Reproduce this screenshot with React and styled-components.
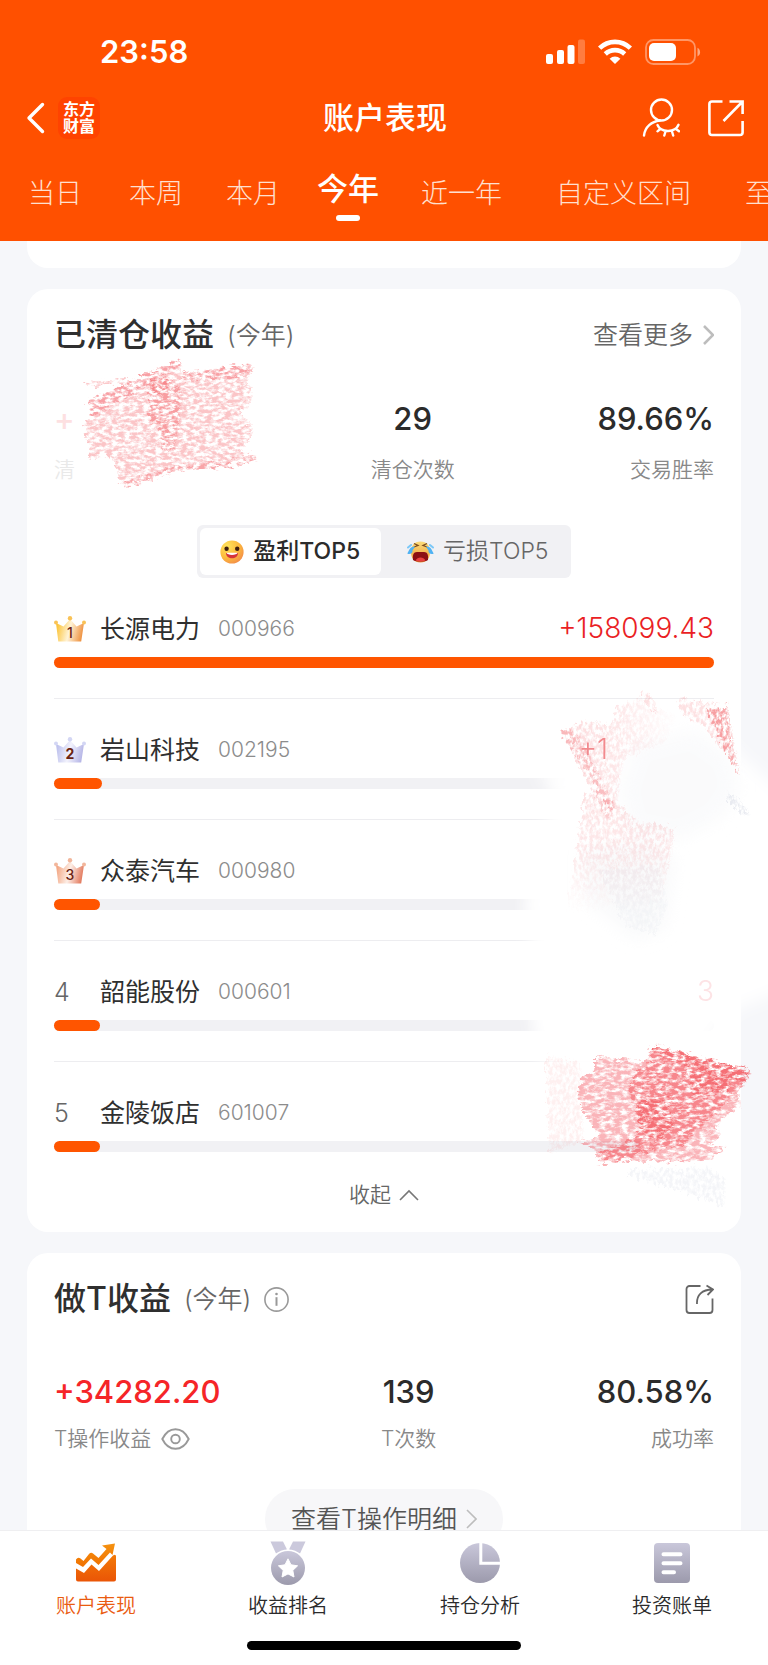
import React, { useState } from 'react'
import styled, { createGlobalStyle } from 'styled-components'

const Global = createGlobalStyle`
    * {
        box-sizing: border-box;
    }

    body {
        margin: 0;
        background: #f6f7fa;
        color: #2f2f2f;
        font-family: Inter, "Noto Sans CJK SC", sans-serif;
        line-height: 1.2;
    }

    h1, h2, p, ol {
        margin: 0;
        padding: 0;
    }

    button {
        margin: 0;
        padding: 0;
        border: 0;
        background: none;
        color: inherit;
        font: inherit;
        cursor: pointer;
    }

    a {
        color: inherit;
        text-decoration: none;
    }

    svg {
        display: block;
        flex: none;
    }
`

const Page = styled.div`
    display: flex;
    flex-direction: column;
    height: 100vh;
    overflow: hidden;
`

// ---------- header ----------

const Header = styled.header`
    flex: none;
    padding-top: 32px;
    background: #ff5000;
    color: #fff;
`

const StatusBar = styled.div`
    display: flex;
    align-items: center;
    justify-content: space-between;
    height: 40px;
    padding: 0 67px 0 100px;
    font-size: 31px;
    font-weight: 600;
`

const StatusIcons = styled.div`
    display: flex;
    align-items: center;
    gap: 13px;
`

const NavBar = styled.div`
    display: grid;
    grid-template-columns: 1fr auto 1fr;
    align-items: center;
    height: 48px;
    margin-top: 22px;
    padding: 0 24px 0 26px;

    & h1 {
        font-size: 31px;
        font-weight: 500;
        line-height: 48px;
    }
`

const NavSide = styled.div`
    display: flex;
    align-items: center;
    justify-content: ${({ $end }) => ($end ? 'flex-end' : 'flex-start')};
    gap: ${({ $end }) => ($end ? 28 : 13)}px;
`

const Logo = styled.span`
    display: block;
    width: 42px;
    height: 42px;
    padding-top: 4px;
    border-radius: 9px;
    background: #ff4300;
    font-size: 16px;
    font-weight: 700;
    line-height: 17px;
    text-align: center;
`

const PeriodTabs = styled.nav`
    display: flex;
    align-items: flex-start;
    height: 72px;
    margin-top: 27px;
    padding-left: 28px;
    overflow: hidden;
`

const PeriodTab = styled.button`
    flex: none;
    margin-right: ${({ $gap }) => $gap}px;
    font-size: ${({ $active }) => ($active ? 31 : 27)}px;
    font-weight: ${({ $active }) => ($active ? 500 : 300)};
    line-height: ${({ $active }) => ($active ? 40 : 50)}px;
    color: ${({ $active }) => ($active ? '#fff' : '#ffe0d1')};

    &::after {
        content: '';
        display: ${({ $active }) => ($active ? 'block' : 'none')};
        width: 24px;
        height: 6px;
        margin: 6px auto 0;
        border-radius: 3px;
        background: #fff;
    }
`

// ---------- cards ----------

const Content = styled.main`
    flex: 1;
    min-height: 0;
    padding: 0 27px;
    overflow: hidden;
`

const Card = styled.section`
    position: relative;
    margin-bottom: 21px;
    padding: 24px 27px 22px;
    border-radius: 21px;
    background: #fff;
`

const CardTail = styled.div`
    height: 27px;
    margin-bottom: 21px;
    border-radius: 0 0 21px 21px;
    background: #fff;
`

const CardHead = styled.div`
    display: flex;
    align-items: center;
    justify-content: space-between;
    height: 44px;
`

const CardTitle = styled.div`
    display: flex;
    align-items: center;
    gap: 13px;

    & h2 {
        font-size: 32px;
        font-weight: 500;
        line-height: 44px;
    }

    & span {
        font-size: 25px;
        font-weight: 350;
        color: #666;
    }
`

const MoreLink = styled.a`
    display: flex;
    align-items: center;
    gap: 10px;
    font-size: 25px;
    font-weight: 350;
    color: #666;
`

const Stats = styled.div`
    display: flex;
    justify-content: space-between;
    margin-top: ${({ $top }) => $top}px;
`

const Stat = styled.div`
    display: flex;
    flex-direction: column;
    align-items: ${({ $align }) => $align || 'center'};
    gap: ${({ $gap }) => $gap}px;
    min-width: ${({ $min }) => $min || 0}px;
`

const StatValue = styled.strong`
    font-size: 31px;
    font-weight: 500;
    line-height: 40px;
    color: ${({ $color }) => $color || '#2b2b2b'};
`

const StatLabel = styled.span`
    display: flex;
    align-items: center;
    gap: 10px;
    font-size: 21px;
    font-weight: 350;
    line-height: 30px;
    color: ${({ $color }) => $color || '#888'};
`

const Segmented = styled.div`
    display: flex;
    gap: 7px;
    width: 374px;
    height: 53px;
    margin: 40px auto 0;
    padding: 3px;
    border-radius: 6px;
    background: #f1f1f4;
`

const Segment = styled.button`
    display: flex;
    flex: 1;
    align-items: center;
    justify-content: center;
    gap: 9px;
    border-radius: 6px;
    background: ${({ $active }) => ($active ? '#fff' : 'transparent')};
    font-size: 23px;
    font-weight: ${({ $active }) => ($active ? 500 : 350)};
    color: ${({ $active }) => ($active ? '#2b2b2b' : '#666')};
`

const StockList = styled.ol`
    list-style: none;
`

const StockRow = styled.li`
    padding: 33px 0 30px;
    border-bottom: 1px solid #ededf0;

    &:last-child {
        padding-bottom: 0;
        border-bottom: 0;
    }
`

const StockLine = styled.div`
    display: flex;
    align-items: center;
    height: 36px;
`

const Rank = styled.span`
    width: 46px;
    font-size: 25px;
    font-weight: 350;
    color: #666;
`

const StockName = styled.span`
    width: 118px;
    font-size: 25px;
    font-weight: 400;
`

const StockCode = styled.span`
    flex: 1;
    font-size: 21px;
    font-weight: 300;
    color: #8c8c8c;
`

const Amount = styled.span`
    position: relative;
    z-index: 1;
    padding-right: ${({ $pad }) => $pad || 0}px;
    font-size: 28px;
    font-weight: 350;
    color: ${({ $color }) => $color || '#ea1f25'};
`

const Track = styled.div`
    height: 11px;
    margin-top: 10px;
    border-radius: 6px;
    background: #f1f1f4;
`

const Fill = styled.div`
    height: 11px;
    border-radius: 6px;
    background: #ff5500;
`

const FoldButton = styled.button`
    display: flex;
    align-items: center;
    gap: 8px;
    margin: 28px auto 0;
    font-size: 21px;
    font-weight: 350;
    line-height: 30px;
    color: #666;
`

const DetailButton = styled.button`
    display: flex;
    align-items: center;
    gap: 9px;
    height: 60px;
    margin: 35px auto 0;
    padding: 0 26px;
    border-radius: 30px;
    background: #f7f7f9;
    font-size: 25px;
    font-weight: 350;
    color: #555;
`

// crayon strokes lie over the card and take no clicks
const Scribble = styled.svg`
    position: absolute;
    top: 0;
    ${({ $side }) => $side}: ${({ $side }) => ($side === 'right' ? -27 : 0)}px;
    overflow: visible;
    pointer-events: none;
`

// ---------- bottom bar ----------

const TabBar = styled.footer`
    flex: none;
    padding: 10px 0 15px;
    border-top: 1px solid #efeff1;
    background: #fff;
`

const TabRow = styled.nav`
    display: grid;
    grid-template-columns: repeat(4, 1fr);
`

const TabItem = styled.a`
    display: flex;
    flex-direction: column;
    align-items: center;
    gap: 8px;
    font-size: 20px;
    font-weight: 350;
    line-height: 26px;
    color: ${({ $active }) => ($active ? '#ea5b10' : '#2b2b2b')};
`

const HomeIndicator = styled.div`
    width: 274px;
    height: 9px;
    margin: 22px auto 0;
    border-radius: 5px;
    background: #000;
`

// ---------- icons ----------

const Signal = () => (
    <svg width="39" height="26" viewBox="0 0 39 26" fill="#fff">
        <rect x="0" y="15" width="7" height="10" rx="2" />
        <rect x="11" y="11" width="7" height="14" rx="2" />
        <rect x="21.500" y="6" width="7" height="19" rx="2" />
        <rect x="32" y="0.500" width="7" height="24.500" rx="2" opacity="0.25" />
    </svg>
)

const Wifi = () => (
    <svg width="34" height="26" viewBox="0 0 34 26" fill="none" stroke="#fff" strokeWidth="4.600">
        <path d="M1.600 9.200a22 22 0 0 1 30.800 0" />
        <path d="M7.300 15a14 14 0 0 1 19.400 0" />
        <path d="M17 25l-5.400-5.300a8 8 0 0 1 10.800 0z" fill="#fff" stroke="none" />
    </svg>
)

const Battery = () => (
    <svg width="56" height="26" viewBox="0 0 56 26">
        <rect x="1" y="1" width="49" height="24" rx="7.500" fill="none" stroke="#fff" strokeWidth="1.800" opacity="0.4" />
        <rect x="4" y="4" width="27" height="18" rx="5" fill="#fff" />
        <path d="M52.500 8.800c2.800 1 4 6.800 0 8.600z" fill="#fff" opacity="0.5" />
    </svg>
)

const BackIcon = () => (
    <svg width="19" height="34" viewBox="0 0 19 34" fill="none" stroke="#fff" strokeWidth="3.400" strokeLinecap="round" strokeLinejoin="round">
        <path d="M16.500 3.500L3 17l13.500 13.500" />
    </svg>
)

const HiddenUserIcon = () => (
    <svg width="38" height="40" viewBox="0 0 38 40" fill="none" stroke="#fff" strokeWidth="2.400" strokeLinecap="round">
        <circle cx="19.500" cy="12" r="10.500" />
        <path d="M18 22.500C9.500 23.500 3 29 2 37.500" />
        <path d="M15.500 27c3 7.500 17.500 8.500 21-.2M18.200 31l-2.700 2.300M23.500 33.500l-1.200 4M30 33.500l1.200 4M34 31l3 2.300" />
    </svg>
)

const ExportIcon = () => (
    <svg width="36" height="38" viewBox="0 0 36 38" fill="none" stroke="#fff" strokeWidth="2.600">
        <path d="M14.500 2.500H4A2.600 2.600 0 0 0 1.400 5v28.500A2.600 2.600 0 0 0 4 36h28a2.600 2.600 0 0 0 2.600-2.500V22" />
        <path d="M21.500 2.500h13.100V15M34.600 2.500L15.500 22" />
    </svg>
)

const Chevron = ({ width = 11, height = 20, stroke = '#bdbdbd', strokeWidth = 2.6 }) => (
    <svg width={width} height={height} viewBox="0 0 11 20" fill="none" stroke={stroke} strokeWidth={strokeWidth}>
        <path d="M1 1l9 9-9 9" />
    </svg>
)

const ChevronUp = () => (
    <svg width="20" height="12" viewBox="0 0 20 12" fill="none" stroke="#777" strokeWidth="1.600">
        <path d="M1 11l9-9 9 9" />
    </svg>
)

const InfoIcon = () => (
    <svg width="25" height="25" viewBox="0 0 25 25" fill="none" stroke="#999" strokeWidth="1.600">
        <circle cx="12.500" cy="12.500" r="11.600" />
        <path d="M12.500 10.200v8.600" strokeWidth="2" />
        <circle cx="12.500" cy="7" r="1.300" fill="#999" stroke="none" />
    </svg>
)

const ShareIcon = () => (
    <svg width="29" height="30" viewBox="0 0 29 30" fill="none" stroke="#666" strokeWidth="1.800">
        <path d="M15.500 2H4.500A3 3 0 0 0 1.500 5v21a3 3 0 0 0 3 3h20a3 3 0 0 0 3-3V14.500" />
        <path d="M12 20C11.500 11 17 5.500 27.500 5.500M21.500 1.500l6.500 4-5.500 5.500" />
    </svg>
)

const EyeIcon = () => (
    <svg width="29" height="22" viewBox="0 0 29 22" fill="none" stroke="#999" strokeWidth="1.900">
        <path d="M1.300 11C4.500 4.500 9 1.200 14.500 1.200S24.500 4.500 27.700 11c-3.200 6.500-7.700 9.800-13.200 9.800S4.500 17.500 1.300 11z" />
        <circle cx="14.500" cy="11" r="4.300" />
    </svg>
)

const SmileIcon = () => (
    <svg width="24" height="24" viewBox="0 0 24 24">
        <defs>
            <radialGradient id="smile" cx="0.3" cy="0.25" r="0.85">
                <stop offset="0" stopColor="#ffe45c" />
                <stop offset="0.600" stopColor="#fcb83c" />
                <stop offset="1" stopColor="#f28a4a" />
            </radialGradient>
        </defs>
        <circle cx="12" cy="12" r="11.600" fill="url(#smile)" />
        <circle cx="6.600" cy="8.800" r="2.200" fill="#40200f" />
        <circle cx="17.200" cy="8.800" r="2.200" fill="#40200f" />
        <path d="M6 13h12c0 7-12 7-12 0z" fill="#d5343a" />
        <path d="M6.500 12.800h11c-.5 2.800-10.500 2.800-11 0z" fill="#fff" />
    </svg>
)

const CryIcon = () => (
    <svg width="27" height="22" viewBox="0 0 27 22">
        <defs>
            <linearGradient id="cry" x1="0" y1="0" x2="0" y2="1">
                <stop offset="0" stopColor="#fbdc7a" />
                <stop offset="1" stopColor="#ef9a36" />
            </linearGradient>
        </defs>
        <path d="M13.500.5C20 .5 23 5 23 11s-3 10.500-9.500 10.500S4 17 4 11 7 .5 13.500.5z" fill="url(#cry)" />
        <path d="M7 2.500l4 2-4 1.500M20 2.500l-4 2 4 1.500" fill="none" stroke="#7a4a1e" strokeWidth="1.300" />
        <path d="M6 19c-1-9 3-8 7.500-8s8.500-1 7.500 8c-3 2-12 2-15 0z" fill="#8b0f14" />
        <path d="M8.500 19.500c2-4 8-4 10 0-3 1.300-7 1.300-10 0z" fill="#e8413f" />
        <path d="M8 5.500C3 5 2.500 9 .3 12.500 3 14 6 12 5.500 9.500zM19 5.500c5-.5 5.500 3.500 7.700 7-2.700 1.500-5.700-.5-5.200-3z" fill="#4fb2f3" />
        <path d="M4 4L1 6.500M23 4l3 2.500" stroke="#7cc8f7" strokeWidth="2" strokeLinecap="round" />
    </svg>
)

const crownColors = {
    1: ['#fbc02d', '#fff3d6', '#ee8f3c', '#f9c256'],
    2: ['#b9bdec', '#f2f2fc', '#b4b4e6', '#d3d6f4'],
    3: ['#f2a17c', '#fdeee6', '#e2775a', '#f2b69b'],
}

const Crown = ({ rank }) => {
    const [from, mid, to, dot] = crownColors[rank]
    return (
        <svg width="32" height="26" viewBox="0 0 32 26">
            <defs>
                <linearGradient id={`crown${rank}`} x1="0" y1="0.300" x2="1" y2="0.500">
                    <stop offset="0" stopColor={from} />
                    <stop offset="0.500" stopColor={mid} />
                    <stop offset="1" stopColor={to} />
                </linearGradient>
            </defs>
            <path d="M2 7l7.500 3.500L16 3l6.500 7.500L30 7l-2.800 18.500H4.300z" fill={`url(#crown${rank})`} />
            <circle cx="2" cy="6.500" r="2" fill={dot} />
            <circle cx="16" cy="2.300" r="2.200" fill={dot} />
            <circle cx="30" cy="6.500" r="2" fill={dot} />
            <text x="16" y="21.500" textAnchor="middle" fontFamily="Inter, sans-serif" fontSize="14" fontWeight={rank === 2 ? 700 : 500} fill="#6b2413">
                {rank}
            </text>
        </svg>
    )
}

const Shade = () => (
    <defs>
        <linearGradient id="shade" x1="0" y1="0" x2="0" y2="1">
            <stop offset="0" stopColor="#c9c7da" />
            <stop offset="1" stopColor="#9c9aac" />
        </linearGradient>
    </defs>
)

const TrendIcon = () => (
    <svg width="40" height="44" viewBox="0 0 40 44">
        <defs>
            <linearGradient id="trend" x1="0" y1="0" x2="0" y2="1">
                <stop offset="0" stopColor="#f59210" />
                <stop offset="1" stopColor="#f07000" />
            </linearGradient>
            <linearGradient id="trendBase" x1="0" y1="0" x2="0" y2="1">
                <stop offset="0" stopColor="#f37a08" />
                <stop offset="1" stopColor="#ea5506" />
            </linearGradient>
        </defs>
        <path d="M0 18.500q2-3 4.500-1l3 2.500 5.500-7q2-2 4-.5l5.500 4.500L30.500 8 26 4.500 39 2.500 36.500 14l-2.500-2.500L22.500 24l-7.500-6.500-8 8.500L0 22z" fill="url(#trend)" />
        <path d="M0 27.500l8 4.500 7.500-8.500 7.500 6.500 14-15.500q3-2 3 1V38.500a2 2 0 0 1-2 2H2a2 2 0 0 1-2-2z" fill="url(#trendBase)" />
    </svg>
)

const MedalIcon = () => (
    <svg width="36" height="44" viewBox="0 0 36 44">
        <Shade />
        <path d="M.5.500H13l4 8-11 4zM23 .5h12.500l-5.500 12-11-4z" fill="#cbc9dc" />
        <circle cx="18" cy="27" r="18.600" fill="#fff" />
        <circle cx="18" cy="27" r="17" fill="url(#shade)" />
        <path d="M18 17.800l3 6 6.600 1-4.800 4.600 1.200 6.600-6-3.100-6 3.100 1.200-6.600-4.800-4.600 6.600-1z" fill="#fff" stroke="#fff" strokeLinejoin="round" />
    </svg>
)

const PieIcon = () => (
    <svg width="40" height="44" viewBox="0 0 40 44">
        <Shade />
        <circle cx="20" cy="22" r="20" fill="url(#shade)" />
        <path d="M20.800 1v21.200H40" fill="none" stroke="#fff" strokeWidth="3" />
    </svg>
)

const BillIcon = () => (
    <svg width="36" height="44" viewBox="0 0 36 44">
        <Shade />
        <rect y="2" width="36" height="40" rx="4" fill="url(#shade)" />
        <path d="M9.500 13.200h17M9.500 22.200h17M9.500 31.200h10.500" stroke="#fff" strokeWidth="4" strokeLinecap="round" />
    </svg>
)

// ---------- crayon strokes ----------

const Grain = ({ id, frequency, gain, cut, seed }) => (
    <filter id={id} x="-10%" y="-10%" width="120%" height="120%">
        <feTurbulence type="fractalNoise" baseFrequency={frequency} numOctaves="4" seed={seed} result="noise" />
        <feDisplacementMap in="SourceGraphic" in2="noise" scale="12" xChannelSelector="R" yChannelSelector="G" result="rough" />
        <feColorMatrix in="noise" type="matrix" values={`0 0 0 0 0  0 0 0 0 0  0 0 0 0 0  ${gain} 0 0 0 ${cut}`} result="mask" />
        <feComposite in="rough" in2="mask" operator="in" result="grainy" />
        <feGaussianBlur in="grainy" stdDeviation="0.5" />
    </filter>
)

const ProfitScribble = () => (
    <Scribble $side="left" width="260" height="240" viewBox="27 289 260 240" aria-hidden="true">
        <defs>
            <Grain id="grainA" frequency="0.16 0.3" gain="3.4" cut="-1.2" seed="4" />
        </defs>
        <g filter="url(#grainA)" fill="#f5757a">
            <path d="M88 402L180 359l3 6-3 8 70-9 4 5-8 11 7 12-3 13-10 8 12 12v11l-12 16 17 3-1 4-21 7-55 4-58 19-2-7-5-19 -8-10-16 7-4-24-4-12 9-8z" opacity="0.42" />
            <path d="M88 401L180 359l2 8-30 14-22 16-36 20zM182 374l68-9 3 5-8 7-60 4z" opacity="0.45" />
            <path d="M150 379l22-3 11 15-2 34-6 27-12-2-3-25-10-5z" opacity="0.5" />
            <path d="M152 379l18-2 3 12-16 5z" opacity="0.5" />
            <path d="M120 484l55-19 60-4 20-5 2 4-22 6-55 4-59 19zM85 382l45-3v3l-44 4z" opacity="0.4" />
        </g>
    </Scribble>
)

const AmountScribble = () => (
    <Scribble $side="right" width="248" height="943" viewBox="520 289 248 943" aria-hidden="true">
        <defs>
            <Grain id="grainB" frequency="0.3 0.2" gain="3.2" cut="-1.1" seed="9" />
            <Grain id="grainC" frequency="0.14 0.28" gain="3.2" cut="-0.9" seed="2" />
            <filter id="soft" x="-20%" y="-20%" width="140%" height="140%">
                <feGaussianBlur stdDeviation="8" />
            </filter>
            <linearGradient id="fadeRight" x1="0" y1="0" x2="1" y2="0">
                <stop offset="0" stopColor="#f36a70" />
                <stop offset="0.500" stopColor="#f36a70" stopOpacity="0.600" />
                <stop offset="1" stopColor="#f36a70" stopOpacity="0" />
            </linearGradient>
            <linearGradient id="fadeDown" x1="0" y1="0" x2="0" y2="1">
                <stop offset="0" stopColor="#f36a70" />
                <stop offset="0.500" stopColor="#f36a70" stopOpacity="0.700" />
                <stop offset="1" stopColor="#f36a70" stopOpacity="0" />
            </linearGradient>
            <clipPath id="edge">
                <rect x="500" y="660" width="268" height="572" />
            </clipPath>
        </defs>
        <g clipPath="url(#edge)">
            <path d="M600 725l110-5 25 30 50 45v195l-50 20-60 80h-70l-15-15-50-12-10-60 0-140 20-50 10-45 10-18z" fill="#fff" filter="url(#soft)" />
            <path d="M535 772l70-2 20 24-70-2zM530 895l30-3v22h-35zM540 1012h40v22h-40z" fill="#fff" filter="url(#soft)" />
            <path d="M600 760h116v40h-116zM640 1140h78v20h-78z" fill="#fff" />
            <path d="M635 745l60-15 35 25 10 35-20 30-40 20-50-10-10-40z" fill="#f6f7f9" opacity="0.5" filter="url(#soft)" />
            <path d="M585 850l60-10 30 20-10 70-30 10-50-40z" fill="#f4f5f7" opacity="0.5" filter="url(#soft)" />
            <g filter="url(#grainB)">
                <path d="M562 734l6-6 24-8 18 7 8-20 24-10 2 8 34 10-10 25-45 20-5 40-8 22z" fill="url(#fadeRight)" opacity="0.26" />
                <path d="M562 733l8-5 14 13 26 55 8 14-8-2z" fill="#f36a70" opacity="0.3" />
                <path d="M640 690l12 6 6 16-8-2zM678 698l28 5 20 4 5 40-8 5-17-25-26-15z" fill="#f36a70" opacity="0.2" />
                <path d="M707 709l21-4 5 35 7 38-14-28-8-16z" fill="#f36a70" opacity="0.55" />
                <path d="M585 795l10-2 20 8 25 22 22 2 13 4-4 30-9 42-40 10-55 0 8-45z" fill="url(#fadeDown)" opacity="0.2" />
                <path d="M546 1056l34 6 4 80-34 10z" fill="#f36a70" opacity="0.1" />
            </g>
            <g filter="url(#grainC)" fill="#f2474e">
                <path d="M596 1056l49 7 7-18 98 25-2 10-10 10 2 15-18 15-6 4 5 14-13 7 18 4 -8 6-14 6-75 1-1-3-31 1-1-8-7-7-13-3 23-5-12-20-10-20 6-20 13-7z" opacity="0.4" />
                <path d="M652 1046l98 25-2 10-10 8-12 16-23 20-18 20-35 6-40 12-12-1 2-8 25-12 18-12-8-28-5-15 8-17 14-6z" opacity="0.42" />
                <path d="M652 1045l98 25-2 11-40-8-54-20zM690 1073l45 4-5 13-35 5zM640 1102l30-4 5 28-12 12-22-8z" opacity="0.36" />
            </g>
            <g filter="url(#grainB)" fill="#e9ebf1">
                <path d="M628 1170l80-2 18 12-2 26-40-14-55-16z" opacity="0.5" />
                <path d="M728 792l12 8 10 14-6 3-18-20z" />
                <path d="M600 870l60-5 8 40-12 30-30-8z" opacity="0.35" />
            </g>
        </g>
    </Scribble>
)

// ---------- data ----------

const periods = [
    { label: '当日', gap: 47 },
    { label: '本周', gap: 43 },
    { label: '本月', gap: 37 },
    { label: '今年', gap: 42 },
    { label: '近一年', gap: 54 },
    { label: '自定义区间', gap: 54 },
    { label: '至今', gap: 0 },
]

const stocks = [
    { name: '长源电力', code: '000966', amount: '+158099.43', percent: 100 },
    { name: '岩山科技', code: '002195', amount: '+1', percent: 7.2, pad: 106, color: '#f28a8e' },
    { name: '众泰汽车', code: '000980', percent: 7 },
    { name: '韶能股份', code: '000601', amount: '3', percent: 7, color: '#fde3e5' },
    { name: '金陵饭店', code: '601007', percent: 6.9 },
]

const tabs = [
    { label: '账户表现', Icon: TrendIcon },
    { label: '收益排名', Icon: MedalIcon },
    { label: '持仓分析', Icon: PieIcon },
    { label: '投资账单', Icon: BillIcon },
]

export default function App() {
    const [period, setPeriod] = useState('今年')
    const [side, setSide] = useState('profit')

    return (
        <Page>
            <Global />
            <Header>
                <StatusBar>
                    <span>23:58</span>
                    <StatusIcons>
                        <Signal />
                        <Wifi />
                        <Battery />
                    </StatusIcons>
                </StatusBar>
                <NavBar>
                    <NavSide>
                        <button aria-label="返回"><BackIcon /></button>
                        <Logo>东方<br />财富</Logo>
                    </NavSide>
                    <h1>账户表现</h1>
                    <NavSide $end>
                        <button aria-label="隐藏账户"><HiddenUserIcon /></button>
                        <button aria-label="分享"><ExportIcon /></button>
                    </NavSide>
                </NavBar>
                <PeriodTabs>
                    {periods.map(({ label, gap }) => (
                        <PeriodTab key={label} $gap={gap} $active={label === period} onClick={() => setPeriod(label)}>
                            {label}
                        </PeriodTab>
                    ))}
                </PeriodTabs>
            </Header>

            <Content>
                <CardTail />

                <Card>
                    <CardHead>
                        <CardTitle>
                            <h2>已清仓收益</h2>
                            <span>(今年)</span>
                        </CardTitle>
                        <MoreLink href="#more">查看更多 <Chevron /></MoreLink>
                    </CardHead>
                    <Stats $top={42}>
                        <Stat $align="flex-start" $gap={16} $min={174}>
                            <StatValue $color="#fde0e1">+</StatValue>
                            <StatLabel $color="#e9e9e9">清</StatLabel>
                        </Stat>
                        <Stat $gap={16}>
                            <StatValue>29</StatValue>
                            <StatLabel>清仓次数</StatLabel>
                        </Stat>
                        <Stat $align="flex-end" $gap={16}>
                            <StatValue>89.66%</StatValue>
                            <StatLabel>交易胜率</StatLabel>
                        </Stat>
                    </Stats>
                    <Segmented>
                        <Segment $active={side === 'profit'} onClick={() => setSide('profit')}>
                            <SmileIcon />盈利TOP5
                        </Segment>
                        <Segment $active={side === 'loss'} onClick={() => setSide('loss')}>
                            <CryIcon />亏损TOP5
                        </Segment>
                    </Segmented>
                    <StockList>
                        {stocks.map((stock, i) => (
                            <StockRow key={stock.code}>
                                <StockLine>
                                    <Rank>{i < 3 ? <Crown rank={i + 1} /> : i + 1}</Rank>
                                    <StockName>{stock.name}</StockName>
                                    <StockCode>{stock.code}</StockCode>
                                    <Amount $pad={stock.pad} $color={stock.color}>{stock.amount}</Amount>
                                </StockLine>
                                <Track>
                                    <Fill style={{ width: `${stock.percent}%` }} />
                                </Track>
                            </StockRow>
                        ))}
                    </StockList>
                    <FoldButton>收起 <ChevronUp /></FoldButton>
                    <ProfitScribble />
                    <AmountScribble />
                </Card>

                <Card>
                    <CardHead>
                        <CardTitle>
                            <h2>做T收益</h2>
                            <span>(今年)</span>
                            <InfoIcon />
                        </CardTitle>
                        <button aria-label="分享做T收益"><ShareIcon /></button>
                    </CardHead>
                    <Stats $top={51}>
                        <Stat $align="flex-start" $gap={12}>
                            <StatValue $color="#f52528">+34282.20</StatValue>
                            <StatLabel>T操作收益 <EyeIcon /></StatLabel>
                        </Stat>
                        <Stat $gap={12}>
                            <StatValue>139</StatValue>
                            <StatLabel>T次数</StatLabel>
                        </Stat>
                        <Stat $align="flex-end" $gap={12}>
                            <StatValue>80.58%</StatValue>
                            <StatLabel>成功率</StatLabel>
                        </Stat>
                    </Stats>
                    <DetailButton>
                        查看T操作明细 <Chevron strokeWidth={1.6} />
                    </DetailButton>
                </Card>
            </Content>

            <TabBar>
                <TabRow>
                    {tabs.map(({ label, Icon }, i) => (
                        <TabItem key={label} href={`#tab${i + 1}`} $active={i === 0}>
                            <Icon />
                            {label}
                        </TabItem>
                    ))}
                </TabRow>
                <HomeIndicator />
            </TabBar>
        </Page>
    )
}
